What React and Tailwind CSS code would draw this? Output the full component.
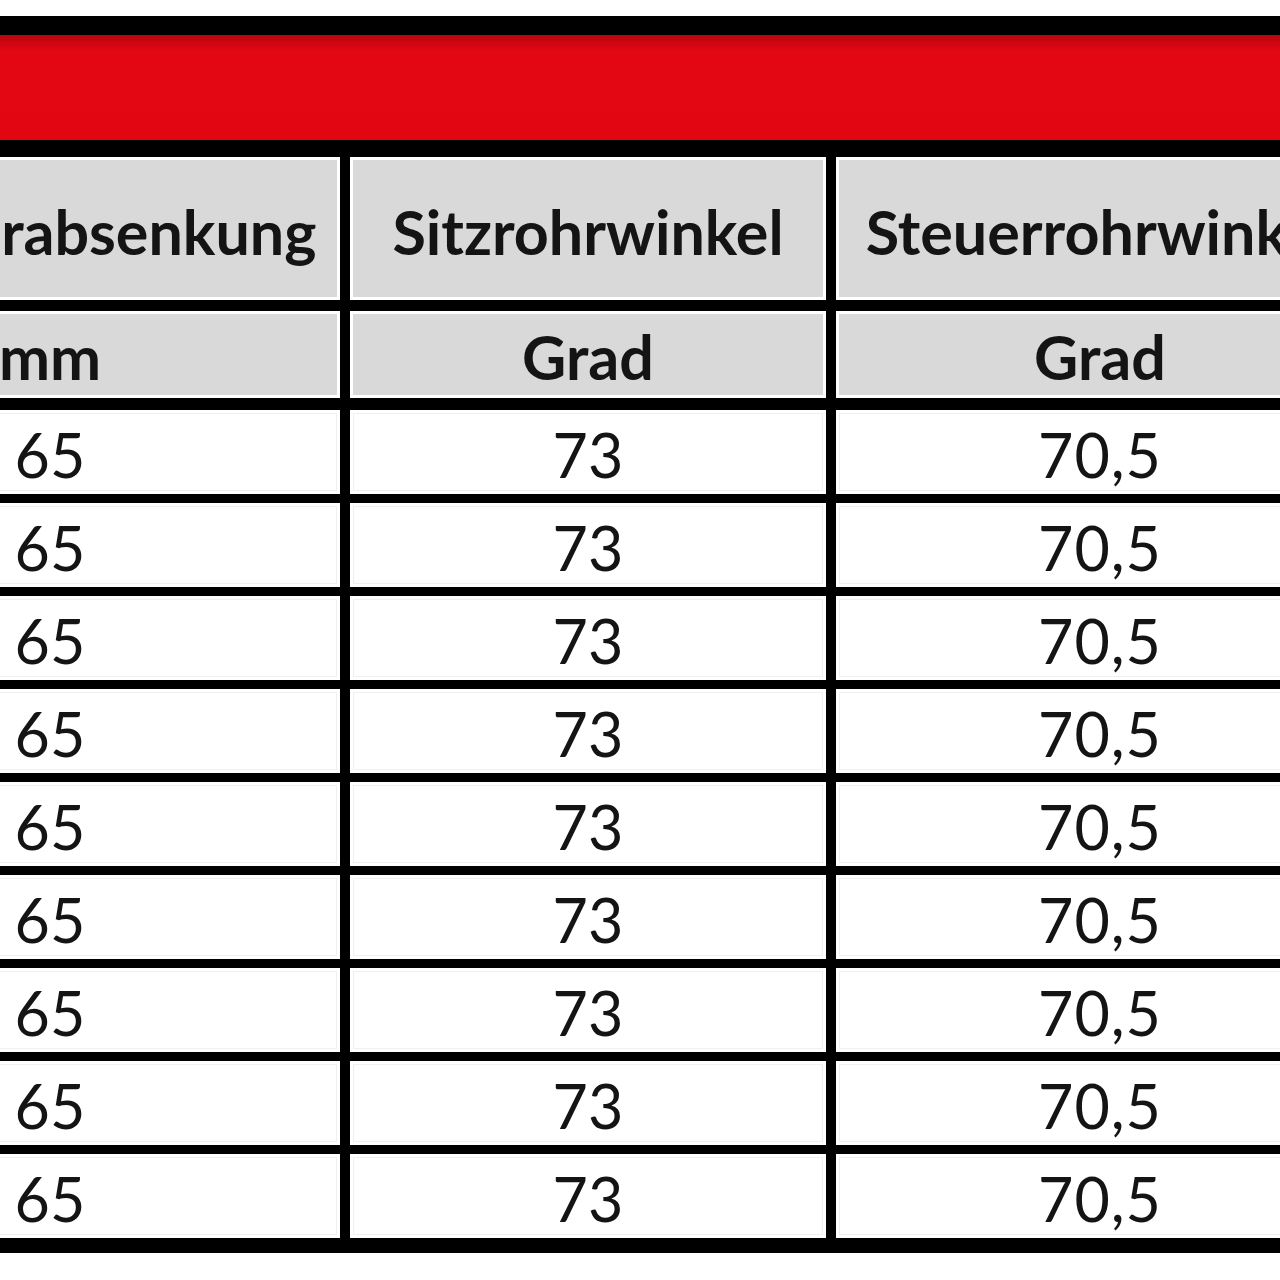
import React from "react";

const rows = Array.from({ length: 9 }, () => ["65", "73", "70,5", "110"]);

function HeadCell({ w, children, h }) {
  return (
    <div
      className={`${w} ${h} shrink-0 border-[3px] border-white bg-[#d9d9d9] flex items-center justify-center overflow-visible whitespace-nowrap`}
    >
      {children}
    </div>
  );
}

function DataCell({ w, children }) {
  return (
    <div className={`${w} h-[84px] shrink-0 bg-white p-[3px]`}>
      <div className="h-full w-full border border-[#f0f0f0] flex items-center justify-center pt-[4px]">
        {children}
      </div>
    </div>
  );
}

const W1 = "w-[580px]";
const W2 = "w-[476px]";
const W3 = "w-[528px]";
const W4 = "w-[400px]";

export default function App() {
  return (
    <div
      className="w-[1280px] h-[1280px] bg-white overflow-hidden pt-[16px] text-[#141414]"
      style={{ fontFamily: "Lato, 'Liberation Sans', sans-serif" }}
    >
      <div className="ml-[-250px] w-[2100px] bg-black pt-[19px] pb-[15px] pl-[10px]">
        <div className="h-[105px] bg-gradient-to-b from-[#b8050e] from-0% via-[#e30613] via-15% to-[#e20612]" />
        <div className="mt-[17px] flex gap-x-[10px]">
          <HeadCell w={W1} h="h-[143px]">
            <span className="text-[61px] font-bold leading-none pt-[6px]">Tretlagerabsenkung</span>
          </HeadCell>
          <HeadCell w={W2} h="h-[143px]">
            <span className="text-[61px] font-bold leading-none pt-[6px]">Sitzrohrwinkel</span>
          </HeadCell>
          <HeadCell w={W3} h="h-[143px]">
            <span className="text-[61px] font-bold leading-none pt-[6px]">Steuerrohrwinkel</span>
          </HeadCell>
          <HeadCell w={W4} h="h-[143px]">
            <span className="text-[61px] font-bold leading-none pt-[6px]">Steuerrohrlänge</span>
          </HeadCell>
        </div>
        <div className="mt-[11px] flex gap-x-[10px]">
          <HeadCell w={W1} h="h-[87px]">
            <span className="text-[61px] font-bold leading-none pt-[4px]">mm</span>
          </HeadCell>
          <HeadCell w={W2} h="h-[87px]">
            <span className="text-[61px] font-bold leading-none pt-[4px]">Grad</span>
          </HeadCell>
          <HeadCell w={W3} h="h-[87px]">
            <span className="text-[61px] font-bold leading-none pt-[4px]">Grad</span>
          </HeadCell>
          <HeadCell w={W4} h="h-[87px]">
            <span className="text-[61px] font-bold leading-none pt-[4px]">mm</span>
          </HeadCell>
        </div>
        <div className="mt-[12px] flex flex-col gap-y-[9px]">
          {rows.map((r, i) => (
            <div key={i} className="flex gap-x-[10px]">
              <DataCell w={W1}>
                <span className="text-[61px] leading-none">{r[0]}</span>
              </DataCell>
              <DataCell w={W2}>
                <span className="text-[61px] leading-none">{r[1]}</span>
              </DataCell>
              <DataCell w={W3}>
                <span className="text-[61px] leading-none tracking-[1px]">{r[2]}</span>
              </DataCell>
              <DataCell w={W4}>
                <span className="text-[61px] leading-none">{r[3]}</span>
              </DataCell>
            </div>
          ))}
        </div>
      </div>
    </div>
  );
}
